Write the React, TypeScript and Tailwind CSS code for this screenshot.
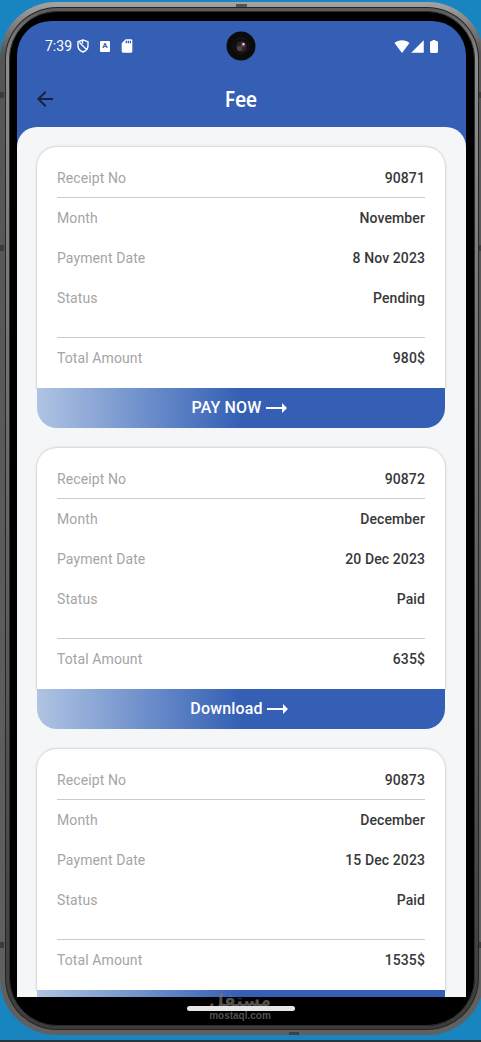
import React from "react";
import { MdArrowBack, MdSdCard, MdSignalCellular4Bar } from "react-icons/md";

type Receipt = {
  no: string;
  month: string;
  date: string;
  status: string;
  amount: string;
  action: string;
};

const receipts: Receipt[] = [
  { no: "90871", month: "November", date: "8 Nov 2023", status: "Pending", amount: "980$", action: "PAY NOW" },
  { no: "90872", month: "December", date: "20 Dec 2023", status: "Paid", amount: "635$", action: "Download" },
  { no: "90873", month: "December", date: "15 Dec 2023", status: "Paid", amount: "1535$", action: "Download" },
];

const Row = ({ label, value }: { label: string; value: string }) => (
  <div className="flex h-10 items-center justify-between text-[14px]">
    <span className="tracking-[0.1px] text-[#a5a5a5]">{label}</span>
    <span className="font-medium tracking-[0.1px] text-[#383838]">{value}</span>
  </div>
);

const ReceiptCard = ({ receipt }: { receipt: Receipt }) => (
  <div className="h-[281px] shrink-0">
    <div className="h-[241px] rounded-t-[20px] bg-white px-5 pt-[11px] shadow-[0_0_2px_1px_#d3d5d7]">
      <Row label="Receipt No" value={receipt.no} />
      <div className="-mt-px h-px bg-[#cbcbcb]" />
      <Row label="Month" value={receipt.month} />
      <Row label="Payment Date" value={receipt.date} />
      <Row label="Status" value={receipt.status} />
      <div className="mt-[19px] h-px bg-[#cbcbcb]" />
      <Row label="Total Amount" value={receipt.amount} />
    </div>
    <div className="relative flex h-10 items-center justify-center gap-1 rounded-b-[20px] bg-linear-to-r from-[#b0c4e2] to-[#345fb4] to-50% pr-[4px] text-base font-medium tracking-[0.15px] text-white">
      <span>{receipt.action}</span>
      <svg width="21" height="12" viewBox="0 0 21 12" fill="#fff">
        <path d="M0 5h16V1l5 5-5 5V7H0z" />
      </svg>
    </div>
  </div>
);

const StatusBar = () => (
  <div className="flex h-[50px] items-center justify-between pl-[28px] pr-[28px] text-white">
    <div className="flex items-center">
      <span className="w-[27px] text-[14px]">7:39</span>
      <svg className="ml-[5px]" width="12" height="14" viewBox="0 0 12 14" fill="none" stroke="#fff" strokeWidth="1.4">
        <path d="M6 .9 1 2.8v3.8c0 3 2.1 5.500 5 6.400 2.900-.9 5-3.400 5-6.400V2.800zM2.500 3.500l7 7M5.500 1.500V4.500" />
      </svg>
      <span className="ml-[11px] flex h-[11px] w-[10px] items-center justify-center rounded-[1px] bg-white text-[8px] font-bold text-[#345fb4]">
        A
      </span>
      <MdSdCard className="ml-[9px] size-4" />
    </div>
    <div className="flex items-center">
      <svg width="16" height="13" viewBox="0 0 16 13" fill="#fff">
        <path d="M.5 3C4.500-.7 11.500-.7 15.500 3L8 13z" />
      </svg>
      <MdSignalCellular4Bar className="size-[15px]" />
      <svg className="ml-[5px]" width="8" height="13" viewBox="0 0 8 13" fill="#fff">
        <path d="M2.500 0h3v1H7l1 1v10l-1 1H1l-1-1V2l1-1h1.500z" />
      </svg>
    </div>
  </div>
);

const Camera = () => (
  <svg className="absolute left-[226px] top-[31px]" width="30" height="30" viewBox="0 0 30 30">
    <circle cx="15" cy="15" r="14.500" fill="#0b0b0c" />
    <circle cx="15" cy="15" r="8" fill="#0d0d0f" stroke="#19191b" />
    <circle cx="15.500" cy="15.500" r="5.500" fill="#2b2328" />
    <circle cx="13.500" cy="17.500" r="2.500" fill="#5a4045" />
    <circle cx="17" cy="14" r="2" fill="#6b4d63" />
    <circle cx="17.500" cy="13" r="1.200" fill="#e2cfdd" />
  </svg>
);

// thin dark bands that cross the metal edge
const EdgeBands = () => (
  <>
    <span className="absolute left-0 top-[92px] h-[6px] w-[4px] bg-[#3c3c3c]" />
    <span className="absolute left-0 top-[245px] h-[6px] w-[4px] bg-[#3c3c3c]" />
    <span className="absolute left-0 top-[942px] h-[6px] w-[4px] bg-[#3c3c3c]" />
    <span className="absolute right-0 top-[92px] h-[6px] w-[2px] bg-[#3c3c3c]" />
    <span className="absolute right-0 top-[245px] h-[6px] w-[2px] bg-[#3c3c3c]" />
    <span className="absolute right-0 top-[942px] h-[6px] w-[2px] bg-[#3c3c3c]" />
    <span className="absolute left-[236px] top-[4px] h-[3px] w-[11px] bg-[#555]" />
    <span className="absolute left-[289px] top-[1032px] h-[3px] w-[10px] bg-[#443f39]" />
  </>
);

const App = () => {
  return (
    <div className="relative h-[1042px] w-[481px] overflow-hidden border-b-2 border-[#26343c] bg-[#1884c0] font-[Roboto,sans-serif]">
      <div className="w-[484px] pt-[2px]">
        <div className="h-[1033px] rounded-[56px] bg-linear-to-b from-[#a5a5a5] via-[#555] via-5% to-[#606060] p-[5px]">
          <div className="h-full rounded-[52px] bg-[#252525] p-px">
            <div className="h-full rounded-[51px] bg-linear-to-b from-[#5a5a5a] via-[#8c8c8c] via-5% to-[#3c3c3c] p-[3px]">
              <div className="h-full rounded-[48px] border border-[#2c2c2c] bg-black pl-[7px] pr-[8px] pt-[9px]">
                <div className="flex h-[976px] flex-col overflow-hidden rounded-t-[34px] bg-[#345fb4]">
                  <StatusBar />
                  <div className="relative flex h-[56px] shrink-0 items-center justify-center">
                    <MdArrowBack className="absolute left-[16px] size-6 text-[#17233c]" />
                    <h1 className="scale-x-90 pt-px pr-px font-['Noto_Sans',sans-serif] text-[21.5px] font-semibold tracking-[-0.4px] text-white">
                      Fee
                    </h1>
                  </div>
                  <div className="flex min-h-0 flex-1 flex-col gap-5 overflow-hidden rounded-t-[20px] bg-[#f4f6f8] pl-5 pr-[21px] pt-5">
                    {receipts.map((receipt) => (
                      <ReceiptCard key={receipt.no} receipt={receipt} />
                    ))}
                  </div>
                </div>
              </div>
            </div>
          </div>
        </div>
      </div>
      <EdgeBands />
      <Camera />
      <div className="absolute left-[186px] top-[984px] flex w-[108px] flex-col items-center text-[#777]/70">
        <span className="h-[26px] pt-[3px] font-['DejaVu_Sans',sans-serif] text-[17px] leading-[26px] font-bold" dir="rtl">
          مستقل
        </span>
        <span className="font-['Liberation_Sans',sans-serif] text-[10px] leading-[11px] font-bold">mostaql.com</span>
      </div>
      <div className="absolute left-[187px] top-[1006px] h-[5px] w-[108px] rounded-full bg-[#e9e5e7]" />
    </div>
  );
};

export default App;
